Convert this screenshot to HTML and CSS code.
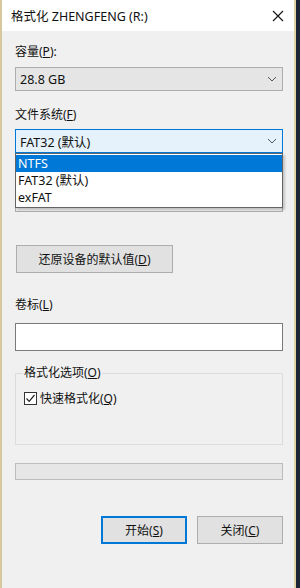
FILE: index.html
```html
<!DOCTYPE html>
<html lang="zh-CN">
<head>
    <meta charset="UTF-8">
    <meta name="viewport" content="width=device-width, initial-scale=1.0">
    <title>格式化 ZHENGFENG (R:)</title>
    <link rel="stylesheet" href="styles.css">
</head>
<body>
    <div class="window">
        <div class="title-bar">
            <span class="title">格式化 ZHENGFENG (R:)</span>
            <svg class="close-icon" width="12" height="12" viewBox="0 0 12 12">
                <path d="M1 1 L11 11 M11 1 L1 11" stroke="#111" stroke-width="1.1" fill="none"/>
            </svg>
        </div>
        <div class="content">
            <div class="label label-first">容量(<u>P</u>):</div>
            <div class="combo">
                <span>28.8 GB</span>
                <svg class="chevron" width="10" height="6" viewBox="0 0 10 6"><path d="M1 1 L5 5 L9 1" stroke="#555" fill="none"/></svg>
            </div>

            <div class="label">文件系统(<u>F</u>)</div>
            <div class="combo-wrap">
                <div class="combo combo-active">
                    <span>FAT32 (默认)</span>
                    <svg class="chevron" width="10" height="6" viewBox="0 0 10 6"><path d="M1 1 L5 5 L9 1" stroke="#555" fill="none"/></svg>
                </div>
                <div class="dropdown">
                    <div class="option selected">NTFS</div>
                    <div class="option">FAT32 (默认)</div>
                    <div class="option">exFAT</div>
                </div>
            </div>

            <div class="label label-hidden">分配单元大小(<u>A</u>)</div>
            <div class="combo combo-under"></div>

            <button class="button restore-button">还原设备的默认值(<u>D</u>)</button>

            <div class="label label-volume">卷标(<u>L</u>)</div>
            <div class="text-input"></div>

            <fieldset class="group">
                <legend>格式化选项(<u>O</u>)</legend>
                <label class="check-row">
                    <span class="checkbox">
                        <svg width="11" height="11" viewBox="0 0 11 11"><path d="M1.5 5.5 L4.2 8.3 L9.5 2" stroke="#222" stroke-width="1.2" fill="none"/></svg>
                    </span>
                    <span>快速格式化(<u>Q</u>)</span>
                </label>
            </fieldset>

            <div class="progress"></div>

            <div class="actions">
                <button class="button action-button primary">开始(<u>S</u>)</button>
                <button class="button action-button">关闭(<u>C</u>)</button>
            </div>
        </div>
    </div>
</body>
</html>
```

FILE: styles.css
```css
body {
    margin: 0;
    background: #1c2538;
    font-family: "Noto Sans", "Noto Sans CJK SC", sans-serif;
    font-size: 12px;
    color: #111;
}
.window {
    width: 292px;
    height: 588px;
    background: #f0f0f0;
    border-left: 2px solid #d8c79c;
    border-right: 2px solid #e2d2a4;
    box-sizing: content-box;
}
.title-bar {
    height: 31px;
    background: #fff;
    display: flex;
    align-items: center;
    justify-content: space-between;
    padding: 0 8px 0 9px;
}
.title {
    font-size: 12.5px;
}
.close-icon {
    margin-right: 2px;
}
.content {
    padding: 0 11px 0 13px;
}
.label {
    line-height: 16px;
    margin-top: 16px;
    margin-bottom: 6px;
}
.label-first {
    margin-top: 13px;
    margin-bottom: 7px;
}
.combo {
    height: 22px;
    border: 1px solid #adadad;
    background: #e5e5e5;
    display: flex;
    align-items: center;
    justify-content: space-between;
    padding: 0 5px 0 4px;
    font-size: 12.5px;
}
.combo-active {
    background: #e5f1fb;
    border-color: #0078d7;
}
.combo-wrap {
    position: relative;
}
.dropdown {
    position: absolute;
    left: 0;
    right: 0;
    top: 24px;
    background: #fff;
    border: 1px solid #646464;
    padding: 1px 0;
    box-shadow: 2px 2px 2px rgba(0, 0, 0, 0.18);
    z-index: 2;
}
.option {
    height: 17px;
    line-height: 17px;
    padding-left: 2px;
    font-size: 12.5px;
}
.option.selected {
    background: #0078d7;
    color: #fff;
}
.label-hidden {
    visibility: hidden;
    margin-top: 13px;
}
.combo-under {
    background: #ebebeb;
}
.button {
    font-family: inherit;
    font-size: 12px;
    color: #111;
    background: #e1e1e1;
    border: 1px solid #adadad;
    padding: 0;
    display: block;
}
.restore-button {
    width: 157px;
    height: 28px;
    margin: 33px 0 0 1px;
}
.label-volume {
    margin-top: 24px;
    margin-bottom: 10px;
}
.text-input {
    height: 26px;
    background: #fff;
    border: 1px solid #7a7a7a;
}
.group {
    margin: 15px 0 0;
    padding: 9px 8px 0;
    height: 68px;
    border: 1px solid #dcdcdc;
    min-width: 0;
}
.group legend {
    padding: 0 1px;
    margin-left: -1px;
    line-height: 14px;
}
.check-row {
    display: flex;
    align-items: center;
    gap: 3px;
}
.checkbox {
    width: 11px;
    height: 11px;
    border: 1px solid #333;
    background: #fff;
    display: flex;
}
.progress {
    margin-top: 18px;
    height: 15px;
    background: #e6e6e6;
    border: 1px solid #bcbcbc;
}
.actions {
    display: flex;
    justify-content: flex-end;
    gap: 10px;
    margin-top: 36px;
}
.action-button {
    width: 86px;
    height: 28px;
}
.primary {
    border: 2px solid #0078d7;
}
```
